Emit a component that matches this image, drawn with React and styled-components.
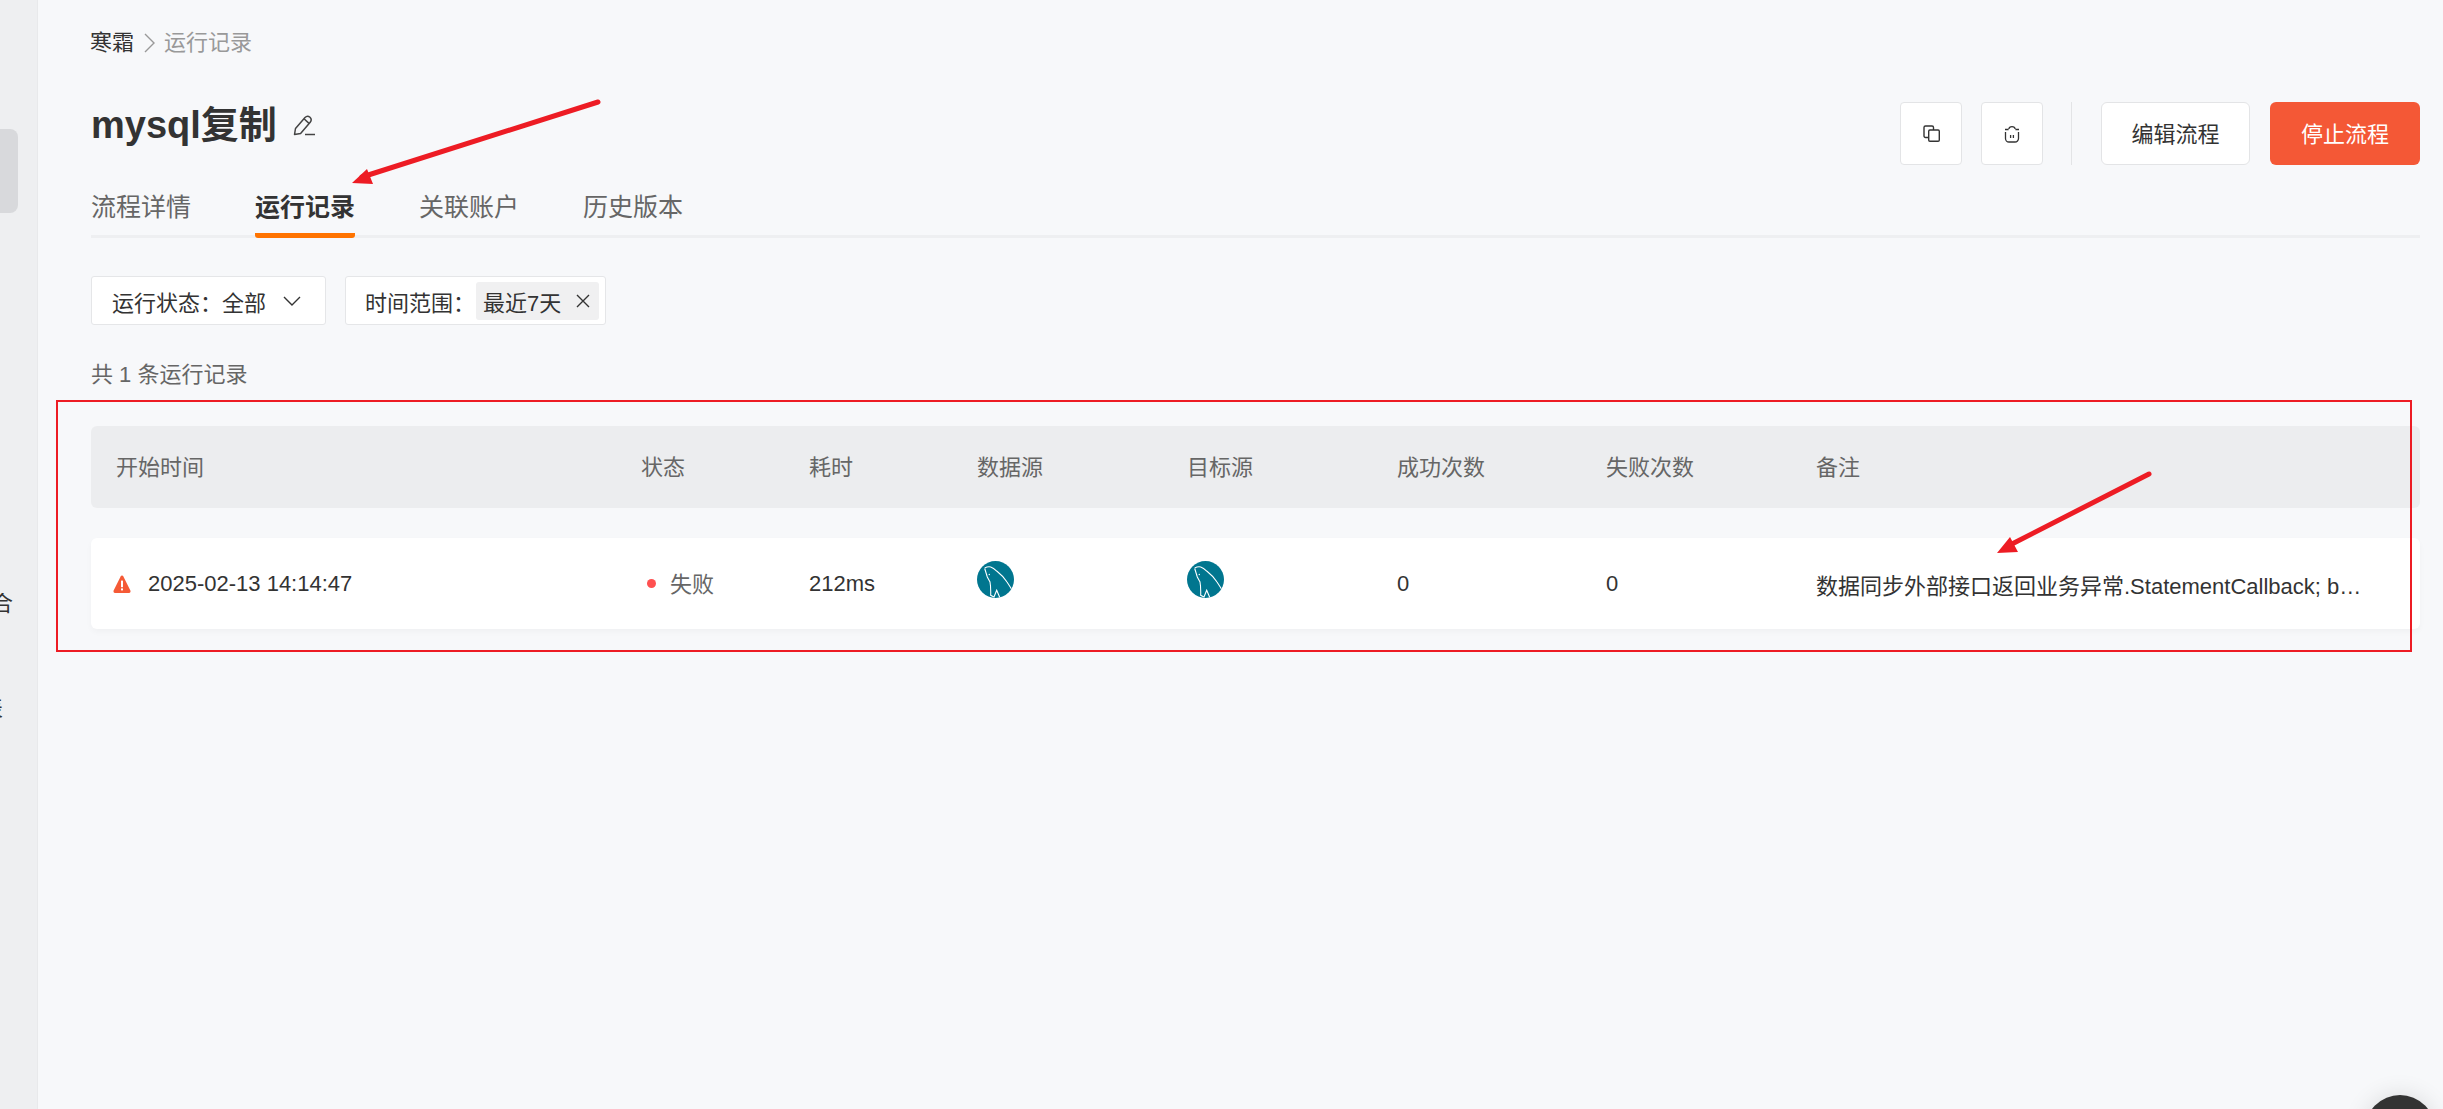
import React from "react";
import styled, { createGlobalStyle } from "styled-components";

const GlobalStyle = createGlobalStyle`
    html, body {
        margin: 0;
        padding: 0;
        height: 100%;
        overflow: hidden;
        background: #f7f8fa;
    }
    body {
        font-family: "Liberation Sans", "Noto Sans CJK SC", sans-serif;
        color: #333;
    }
`;

const Shell = styled.div`
    position: relative;
    display: flex;
    height: 1109px;
    overflow: hidden;
`;

const Sidebar = styled.aside`
    flex: 0 0 38px;
    box-sizing: border-box;
    display: flex;
    flex-direction: column;
    align-items: flex-start;
    padding-top: 129px;
    background: #eeeff1;
    border-right: 1px solid #e8e9eb;
`;

const SideActive = styled.div`
    width: 18px;
    height: 84px;
    background: #d8d9dc;
    border-radius: 0 8px 8px 0;
`;

const SideLabel = styled.div`
    width: ${({ $clip }) => $clip}px;
    margin-top: ${({ $gap }) => $gap}px;
    display: flex;
    justify-content: flex-end;
    overflow: hidden;
    white-space: nowrap;
    font-size: 22px;
    line-height: 22px;
    color: #333;
`;

const Main = styled.main`
    flex: 1;
    min-width: 0;
    padding: 32px 23px 0 53px;
`;

const Breadcrumb = styled.nav`
    display: flex;
    align-items: center;
    font-size: 22px;
    line-height: 22px;
    color: #333;
    margin-left: -1px;

    svg {
        margin: 0 9px 0 10px;
    }
`;

const CrumbCurrent = styled.span`
    color: #999;
`;

const HeaderRow = styled.header`
    display: flex;
    justify-content: space-between;
    align-items: flex-start;
    margin-top: 48px;
    height: 63px;
`;

const TitleGroup = styled.div`
    display: flex;
    align-items: center;
    gap: 16px;
    height: 46px;
`;

const Title = styled.h1`
    margin: 0;
    font-size: 38px;
    line-height: 46px;
    font-weight: 700;
    color: #333;
`;

const Actions = styled.div`
    display: flex;
    align-items: stretch;
    height: 63px;
`;

const IconButton = styled.button`
    box-sizing: border-box;
    width: 62px;
    margin-right: 19px;
    display: flex;
    align-items: center;
    justify-content: center;
    padding: 0;
    background: #fff;
    border: 1px solid #e3e4e6;
    border-radius: 4px;
`;

const Divider = styled.div`
    width: 1px;
    margin: 0 29px 0 9px;
    background: #e3e4e6;
`;

const TextButton = styled.button`
    box-sizing: border-box;
    width: ${({ $primary }) => ($primary ? "150px" : "149px")};
    margin-left: ${({ $primary }) => ($primary ? "20px" : "0")};
    padding: 0 0 3px;
    font-family: inherit;
    font-size: 22px;
    color: ${({ $primary }) => ($primary ? "#fff" : "#333")};
    background: ${({ $primary }) => ($primary ? "#f45836" : "#fff")};
    border: ${({ $primary }) => ($primary ? "none" : "1px solid #e3e4e6")};
    border-radius: 6px;
`;

const TabBar = styled.div`
    display: flex;
    gap: 64px;
    margin-top: 25px;
    height: 45px;
    border-bottom: 3px solid #eeeff1;
`;

const Tab = styled.div`
    height: 48px;
    box-sizing: border-box;
    font-size: 25px;
    line-height: 34px;
    padding-bottom: 9px;
    font-weight: ${({ $active }) => ($active ? 700 : 400)};
    color: ${({ $active }) => ($active ? "#333" : "#666")};
    border-bottom: 5px solid ${({ $active }) => ($active ? "#ff7300" : "transparent")};
    border-radius: 0 0 3px 3px;
`;

const Filters = styled.div`
    display: flex;
    gap: 19px;
    margin-top: 38px;
`;

const FilterBox = styled.div`
    box-sizing: border-box;
    height: 49px;
    display: flex;
    align-items: center;
    padding: ${({ $tagged }) => ($tagged ? "0 6px 0 19px" : "0 24px 0 20px")};
    gap: ${({ $tagged }) => ($tagged ? "1px" : "17px")};
    background: #fff;
    border: 1px solid #e5e6e8;
    border-radius: 3px;
    font-size: 22px;
    color: #333;
`;

const FilterTag = styled.span`
    display: flex;
    align-items: center;
    gap: 15px;
    height: 38px;
    padding: 0 9px 0 7px;
    background: #f0f0f1;
    border-radius: 3px;
`;

const CountLine = styled.div`
    margin-top: 39px;
    font-size: 22px;
    line-height: 22px;
    color: #666;
`;

const gridColumns = "525px 168px 168px 210px 210px 209px 210px minmax(0, 1fr)";

const TableHead = styled.div`
    display: grid;
    grid-template-columns: ${gridColumns};
    align-items: center;
    box-sizing: border-box;
    height: 82px;
    margin-top: 40px;
    padding-bottom: 4px;
    background: #ecedef;
    border-radius: 6px;
    font-size: 22px;
    color: #666;
`;

const TableRow = styled.div`
    display: grid;
    grid-template-columns: ${gridColumns};
    align-items: center;
    height: 91px;
    margin-top: 30px;
    background: #fff;
    border-radius: 6px;
    box-shadow: 0 3px 6px rgba(0, 0, 0, 0.03);
    font-size: 22px;
    color: #333;
`;

const Cell = styled.div`
    padding-left: ${({ $pad }) => ($pad ? $pad : 25)}px;
    min-width: 0;
    display: flex;
    align-items: center;
`;

const StartCell = styled(Cell)`
    gap: 17px;
`;

const StatusCell = styled(Cell)`
    margin-top: -3px;
`;

const StatusDot = styled.i`
    width: 9px;
    height: 9px;
    margin: 3px 14px 0 6px;
    border-radius: 50%;
    background: #ff5050;
`;

const StatusText = styled.span`
    color: #666;
`;

const Remark = styled.div`
    width: 549px;
    padding-left: 25px;
    overflow: hidden;
    white-space: nowrap;
    text-overflow: ellipsis;
`;

const LogoCell = styled(Cell)`
    margin-top: -8px;
`;

const FloatingCircle = styled.div`
    position: absolute;
    left: 2365px;
    top: 1095px;
    width: 70px;
    height: 70px;
    border-radius: 50%;
    background: #333;
    box-shadow: 0 0 24px rgba(0, 0, 0, 0.12);
`;

const RedFrame = styled.div`
    position: absolute;
    left: 56px;
    top: 400px;
    width: 2356px;
    height: 252px;
    box-sizing: border-box;
    border: 2px solid #ed1c24;
    pointer-events: none;
`;

const ArrowLayer = styled.svg`
    position: absolute;
    left: 0;
    top: 0;
    pointer-events: none;
`;

const columns = ["开始时间", "状态", "耗时", "数据源", "目标源", "成功次数", "失败次数", "备注"];
const tabs = ["流程详情", "运行记录", "关联账户", "历史版本"];

const Chevron = ({ dir }) => (
    <svg width={dir === "down" ? 18 : 11} height={dir === "down" ? 10 : 22} viewBox={dir === "down" ? "0 0 18 10" : "0 0 11 22"} fill="none" stroke={dir === "down" ? "#333" : "#999"} strokeWidth="1.4">
        <path d={dir === "down" ? "M1 1l8 8 8-8" : "M1 2l9 9-9 9"} />
    </svg>
);

const PencilIcon = () => (
    <svg width="22" height="21" viewBox="0 0 22 21" fill="none" stroke="#444" strokeWidth="1.5">
        <path d="M1.5 19.5L2.5 13.5 12 2.5C13.5 1 15.5 1 17 2.3 18.5 3.8 18.5 5.6 17.2 7.2L7.6 18.5Z" strokeLinejoin="round" />
        <path d="M11 3.8l5 4.6" />
        <path d="M12 19.5h10" />
    </svg>
);

const CopyIcon = () => (
    <svg width="17" height="17" viewBox="0 0 17 17" fill="none" stroke="#333" strokeWidth="1.4">
        <path d="M5 12.5H2.5A1.5 1.5 0 0 1 1 11V2.5A1.5 1.5 0 0 1 2.5 1H9a1.5 1.5 0 0 1 1.5 1.5V5" />
        <rect x="5.7" y="5" width="10.6" height="11.3" rx="1.2" />
    </svg>
);

const TrashIcon = () => (
    <svg width="16" height="18" viewBox="0 0 16 18" fill="none" stroke="#333" strokeWidth="1.3">
        <path d="M1 4.5h3.6M11.4 4.5H15M4.8 4C5.3.7 10.7.7 11.2 4" />
        <path d="M1.5 7v6.5A3.5 3.5 0 0 0 5 17h6a3.5 3.5 0 0 0 3.5-3.5V7" />
        <path d="M6.6 10v3M9.4 10v3" />
    </svg>
);

const CloseIcon = () => (
    <svg width="14" height="14" viewBox="0 0 14 14" fill="none" stroke="#333" strokeWidth="1.4">
        <path d="M1 1l12 12M13 1L1 13" />
    </svg>
);

const WarningIcon = () => (
    <svg width="18" height="18" viewBox="0 0 18 18">
        <path d="M7.6 1.4c.6-1.1 2.2-1.1 2.8 0l7 14c.5 1.1-.2 2.6-1.4 2.6H2c-1.2 0-1.9-1.5-1.4-2.6z" fill="#f55a36" />
        <rect x="8" y="5.6" width="2" height="6.6" fill="#fff" />
        <rect x="8" y="13.4" width="2" height="2" fill="#fff" />
    </svg>
);

const MysqlLogo = () => (
    <svg width="37" height="37" viewBox="0 0 37 37">
        <defs>
            <clipPath id="mysql-disc">
                <circle cx="18.5" cy="18.5" r="18.5" />
            </clipPath>
        </defs>
        <circle cx="18.5" cy="18.5" r="18.5" fill="#01768f" />
        <g clipPath="url(#mysql-disc)" fill="none" stroke="#fff" strokeWidth="1.1">
            <path d="M7.7 7C10 5.8 12 5.6 13.7 6 15.5 6.6 17.5 8 20 10.3 24 13.5 27.5 17 30 21 32 24 33.7 26.5 35 29" />
            <path d="M7.7 7.5L10.3 16 13 21C13.8 25 13.8 30 13.7 34.3L17 36 19.7 29.3 23 37" />
        </g>
        <circle cx="12.3" cy="13.5" r="0.7" fill="#fff" />
    </svg>
);

const App = () => {
    return (
        <Shell>
            <GlobalStyle />
            <Sidebar>
                <SideActive />
                <SideLabel $clip={13} $gap={380}>聚合</SideLabel>
                <SideLabel $clip={3} $gap={83}>报表</SideLabel>
            </Sidebar>
            <Main>
                <Breadcrumb>
                    寒霜
                    <Chevron dir="right" />
                    <CrumbCurrent>运行记录</CrumbCurrent>
                </Breadcrumb>
                <HeaderRow>
                    <TitleGroup>
                        <Title>mysql复制</Title>
                        <PencilIcon />
                    </TitleGroup>
                    <Actions>
                        <IconButton><CopyIcon /></IconButton>
                        <IconButton><TrashIcon /></IconButton>
                        <Divider />
                        <TextButton>编辑流程</TextButton>
                        <TextButton $primary>停止流程</TextButton>
                    </Actions>
                </HeaderRow>
                <TabBar>
                    {tabs.map((tab) => (
                        <Tab key={tab} $active={tab === "运行记录"}>{tab}</Tab>
                    ))}
                </TabBar>
                <Filters>
                    <FilterBox>
                        <span>{"运行状态\uFF1A全部"}</span>
                        <Chevron dir="down" />
                    </FilterBox>
                    <FilterBox $tagged>
                        <span>{"时间范围\uFF1A"}</span>
                        <FilterTag>最近7天<CloseIcon /></FilterTag>
                    </FilterBox>
                </Filters>
                <CountLine>共 1 条运行记录</CountLine>
                <TableHead>
                    {columns.map((col) => (
                        <Cell key={col}>{col}</Cell>
                    ))}
                </TableHead>
                <TableRow>
                    <StartCell $pad={22}><WarningIcon />2025-02-13 14:14:47</StartCell>
                    <StatusCell><StatusDot /><StatusText>失败</StatusText></StatusCell>
                    <Cell>212ms</Cell>
                    <LogoCell><MysqlLogo /></LogoCell>
                    <LogoCell><MysqlLogo /></LogoCell>
                    <Cell>0</Cell>
                    <Cell>0</Cell>
                    <Remark>数据同步外部接口返回业务异常.StatementCallback; bad SQL grammar [select * from t]</Remark>
                </TableRow>
            </Main>
            <FloatingCircle />
            <RedFrame />
            <ArrowLayer width="2443" height="1109" fill="none">
                <path d="M598 102L362 177" stroke="#ed1c24" strokeWidth="5" strokeLinecap="round" />
                <polygon points="352,183 367,169 373,184" fill="#ed1c24" />
                <path d="M2149 474L2008 546" stroke="#ed1c24" strokeWidth="5" strokeLinecap="round" />
                <polygon points="1997,553 2010,537 2018,552" fill="#ed1c24" />
            </ArrowLayer>
        </Shell>
    );
};

export default App;
